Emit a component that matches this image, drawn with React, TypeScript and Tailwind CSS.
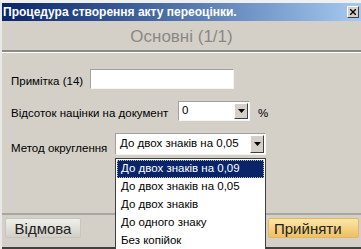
import React from 'react';

const font = { fontFamily: '"Liberation Sans", Arial, sans-serif' };

const Arrow: React.FC = () => (
  <div className="flex h-full w-[14px] items-center justify-center border border-t-white border-l-white border-r-[#404040] border-b-[#404040] bg-[#d4d0c8]">
    <svg width="7" height="4" viewBox="0 0 7 4">
      <path d="M0 0h7L3.5 4z" fill="#000" />
    </svg>
  </div>
);

const OPTIONS = [
  'До двох знаків на 0,09',
  'До двох знаків на 0,05',
  'До двох знаків',
  'До одного знаку',
  'Без копійок',
];

const App: React.FC = () => {
  return (
    <div className="relative flex h-[249px] w-[361px] flex-col overflow-hidden border-t-[3px] border-l-2 border-t-[#f0f0f0] border-l-[#e8e8e8] bg-[#d4d0c8] text-[11.5px] text-black" style={font}>
      {/* title bar */}
      <div className="flex h-[18px] items-center justify-between bg-gradient-to-r from-[#0a246a] to-[#a6caf0] pl-[1px] pr-[2px]">
        <span className="text-[12px] font-bold text-white">Процедура створення акту переоцінки.</span>
        <div className="flex h-[12px] w-[12px] items-center justify-center border border-t-white border-l-white border-r-[#404040] border-b-[#404040] bg-[#d4d0c8]">
          <svg width="6" height="6" viewBox="0 0 6 6">
            <path d="M0 0L6 6M6 0L0 6" stroke="#000" strokeWidth="1.3" />
          </svg>
        </div>
      </div>

      {/* header */}
      <div className="flex h-[31px] items-center justify-center border-b-2 border-b-[#8c8a86] pt-[2px]">
        <span className="text-[17px] text-[#8a8884]">Основні (1/1)</span>
      </div>

      {/* main */}
      <div className="flex flex-1 flex-col gap-[12px] border-t border-t-white px-[9px] pt-[16px]">
        <div className="flex items-end">
          <span className="mb-[-1px] w-[79px] shrink-0 whitespace-nowrap">Примітка (14)</span>
          <div className="h-[20px] w-[144px] border border-t-[#a0a0a0] border-l-[#a0a0a0] border-r-[#f4f4f4] border-b-[#f4f4f4] bg-white" />
        </div>
        <div className="flex items-end">
          <span className="mb-[-1px] w-[167px] shrink-0 whitespace-nowrap">Відсоток націнки на документ</span>
          <div className="flex h-[20px] w-[72px] items-center border border-t-[#a0a0a0] border-l-[#a0a0a0] border-r-[#f4f4f4] border-b-[#f4f4f4] bg-white p-[1px]">
            <span className="flex-1 pl-[2px]">0</span>
            <Arrow />
          </div>
          <span className="mb-[-1px] ml-[8px]">%</span>
        </div>
        <div className="flex items-end">
          <span className="mb-[-2px] w-[104px] shrink-0 whitespace-nowrap">Метод округлення</span>
          <div className="flex h-[22px] w-[151px] items-center border border-t-[#a0a0a0] border-l-[#a0a0a0] border-r-[#f4f4f4] border-b-[#f4f4f4] bg-white p-[1px]">
            <span className="flex-1 whitespace-nowrap pl-[3px]">До двох знаків на 0,05</span>
            <Arrow />
          </div>
        </div>
      </div>

      {/* footer */}
      <div className="flex h-[34px] items-start justify-between border-t-2 border-t-[#a8a6a2] pt-[3px] pr-[2px] pl-[3px]">
        <button className="h-[20px] w-[76px] rounded-[2px] border border-[#c8c6c0] bg-gradient-to-b from-[#f0f0ea] to-[#d2cfc8] text-[15px] leading-none text-[#222]">
          Відмова
        </button>
        <button className="h-[20px] w-[91px] rounded-[2px] border border-[#e0b860] bg-gradient-to-b from-[#fbe6a8] to-[#eec060] pl-[5px] text-left text-[15px] leading-none text-[#222]">
          Прийняти
        </button>
      </div>
      <div className="h-[2px] bg-[#404040]" />

      {/* open dropdown list */}
      <div className="absolute top-[155px] left-[113px] w-[151px] border border-[#404040] bg-white p-[1px]">
        {OPTIONS.map((o, i) => (
          <div
            key={o}
            className={
              i === 0
                ? 'flex h-[18px] items-center whitespace-nowrap border border-dotted border-[#c0c0c0] bg-[#0a246a] pl-[3px] text-white'
                : 'flex h-[18px] items-center whitespace-nowrap border border-transparent pl-[3px]'
            }
          >
            {o}
          </div>
        ))}
      </div>
    </div>
  );
};

export default App;
